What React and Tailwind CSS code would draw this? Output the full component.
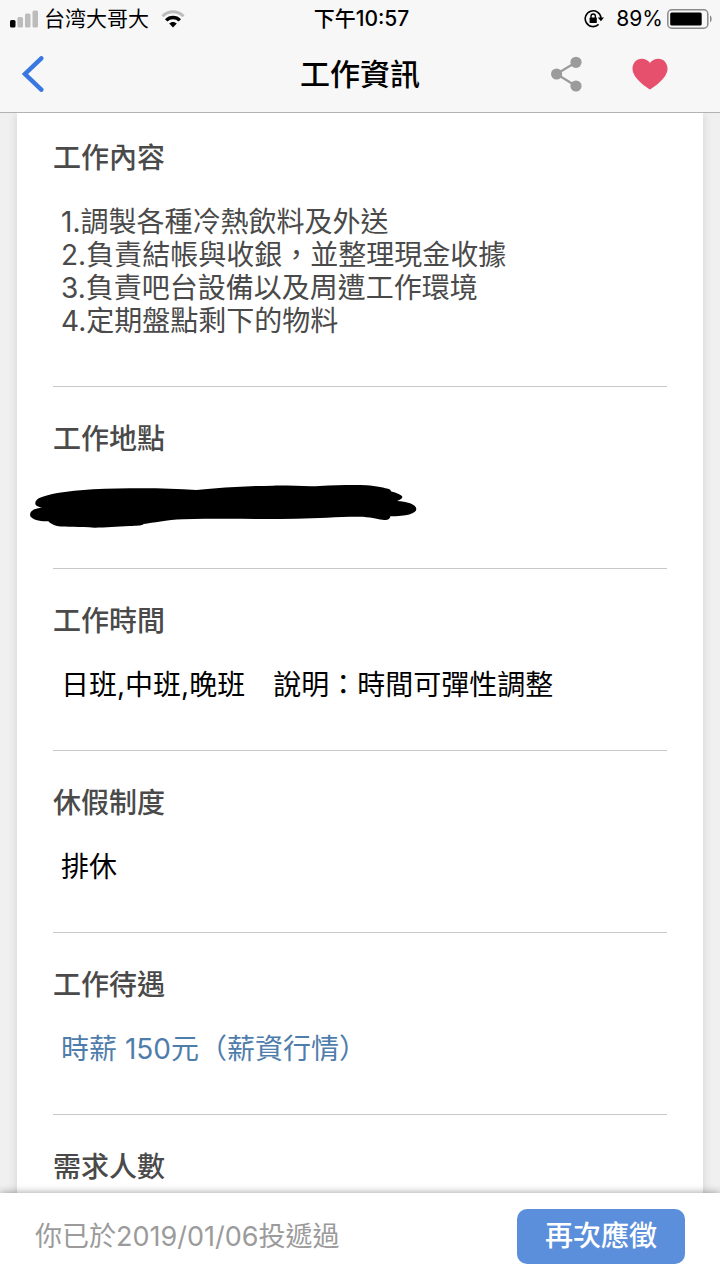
import React from "react";

const SignalIcon = () => (
  <svg className="h-[18px] w-7" viewBox="0 0 28 18" aria-hidden="true">
    <rect x="0" y="10" width="5.5" height="7.5" rx="1.5" fill="#000" />
    <rect x="7.5" y="7" width="5.5" height="10.5" rx="1.5" fill="#bcbcbc" />
    <rect x="15" y="3.5" width="5.5" height="14" rx="1.5" fill="#bcbcbc" />
    <rect x="22.5" y="0.5" width="5.5" height="17" rx="1.5" fill="#bcbcbc" />
  </svg>
);

const WifiIcon = () => (
  <svg className="h-[18px] w-6" viewBox="0 0 24 18" fill="none" aria-hidden="true">
    <path d="M1.5 6.2C7.5 0.2 16.5 0.2 22.5 6.2" stroke="#bcbcbc" strokeWidth="3" />
    <path d="M5.2 10.4C9 6.6 15 6.6 18.8 10.4" stroke="#000" strokeWidth="3.4" />
    <path d="M8.2 13.6C10.4 11.4 13.6 11.4 15.8 13.6L12 17.4Z" fill="#000" />
  </svg>
);

const RotationLockIcon = () => (
  <svg className="h-5 w-5" viewBox="0 0 20 20" fill="none" aria-hidden="true">
    <path d="M14.6 15.4A7.9 7.9 0 1 1 17 9" stroke="#000" strokeWidth="1.6" />
    <path d="M13.8 8.4H20L16.9 12.2Z" fill="#000" />
    <rect x="5.6" y="8.6" width="7.2" height="5.4" rx="0.6" fill="#000" />
    <path d="M7 9V7.2a2.2 2.2 0 0 1 4.4 0V9" stroke="#000" strokeWidth="1.4" />
  </svg>
);

const BatteryIcon = () => (
  <svg className="h-5 w-[46px]" viewBox="0 0 46 20" fill="none" aria-hidden="true">
    <rect x="0.8" y="0.8" width="40" height="18.4" rx="4" stroke="#8a8a8a" strokeWidth="1.5" />
    <rect x="3.2" y="3.5" width="31.5" height="13" rx="1.5" fill="#000" />
    <path d="M43 6.6C45.2 7.6 45.2 12.4 43 13.4Z" fill="#8a8a8a" />
  </svg>
);

const BackIcon = () => (
  <svg className="h-9 w-[22px]" viewBox="0 0 22 36" fill="none" aria-hidden="true">
    <path
      d="M19.3 2.3L3 18L19.3 33.7"
      stroke="#3878e0"
      strokeWidth="4.4"
      strokeLinecap="round"
      strokeLinejoin="miter"
    />
  </svg>
);

const ShareIcon = () => (
  <svg className="h-9 w-[31px]" viewBox="0 0 31 36" aria-hidden="true">
    <path d="M25 6.3L5.5 18L25 30" fill="none" stroke="#9b9b9b" strokeWidth="2.2" />
    <circle cx="25" cy="6.3" r="5.6" fill="#9b9b9b" />
    <circle cx="5.6" cy="18" r="5.6" fill="#9b9b9b" />
    <circle cx="25" cy="30" r="5.6" fill="#9b9b9b" />
  </svg>
);

const HeartIcon = () => (
  <svg className="h-8 w-9" viewBox="0 0 36 32" aria-hidden="true">
    <path
      d="M18 31.5C16.5 30.5 0.5 21 0.5 10.8C0.5 4.8 4.6 0.8 9.6 0.8C13.2 0.8 16.4 2.4 18 5C19.6 2.4 22.8 0.8 26.4 0.8C31.4 0.8 35.5 4.8 35.5 10.8C35.5 21 19.5 30.5 18 31.5Z"
      fill="#e6506c"
    />
  </svg>
);

// hand-drawn marker covering the address
const Scribble = () => (
  <svg
    className="-mt-[3px] -mb-2 -ml-8 h-[43px] w-[388px] shrink-0"
    viewBox="28 41 1164 129"
    aria-hidden="true"
  >
    <path
      d="M47 95C48 84 62 77 84 72C120 62 170 57 220 54C320 50 430 49 530 56C600 49 680 44 760 43C810 42 860 46 900 44C950 42 1000 40 1040 42C1070 44 1095 49 1112 55C1114 58 1112 60 1118 61C1132 65 1145 70 1148 76C1149 82 1140 86 1132 89C1160 90 1190 99 1190 113C1190 127 1160 135 1112 135C1112 143 1104 147 1094 146C1078 144 1060 139 1030 136C960 135 900 141 830 142C720 144 600 141 490 144C440 146 400 155 372 158C366 164 350 163 330 164C290 165 260 169 225 169C180 166 140 168 112 164C98 160 92 156 86 150C60 151 38 145 32 135C28 120 42 111 68 109C54 106 46 102 47 95Z"
      fill="#000"
    />
  </svg>
);

const sections = [
  {
    title: "工作內容",
    content: (
      <ol className="text-[#4a4a4a]">
        <li>1.調製各種冷熱飲料及外送</li>
        <li>2.負責結帳與收銀，並整理現金收據</li>
        <li>3.負責吧台設備以及周遭工作環境</li>
        <li>4.定期盤點剩下的物料</li>
      </ol>
    ),
  },
  { title: "工作地點", content: <Scribble /> },
  { title: "工作時間", content: <p>日班,中班,晚班　說明：時間可彈性調整</p> },
  { title: "休假制度", content: <p>排休</p> },
  {
    title: "工作待遇",
    content: (
      <a href="#salary" className="text-[#4f7dab]">
        時薪 150元（薪資行情）
      </a>
    ),
  },
  { title: "需求人數", content: null },
];

const StatusBar = () => (
  <div className="grid h-[38px] grid-cols-[1fr_auto_1fr] items-center pr-[7px] pl-[10px] text-[21px] leading-9">
    <div className="flex items-center gap-[6px]">
      <SignalIcon />
      <span>台湾大哥大</span>
      <span className="ml-[6px]">
        <WifiIcon />
      </span>
    </div>
    <span className="font-medium">下午10:57</span>
    <div className="flex items-center justify-end gap-1">
      <RotationLockIcon />
      <span className="ml-2">89%</span>
      <BatteryIcon />
    </div>
  </div>
);

const App = () => {
  return (
    <div
      lang="zh-TW"
      className="flex h-screen flex-col overflow-hidden bg-[#f0f0f0] font-['Inter','Noto_Sans_CJK_TC',sans-serif] text-black"
    >
      <header className="shrink-0 border-b border-[#b2b2b2] bg-[#f7f7f7]">
        <StatusBar />
        <nav className="grid grid-cols-[1fr_auto_1fr] items-center px-[22px] pt-4 pb-[18px]">
          <button type="button" aria-label="返回" className="justify-self-start">
            <BackIcon />
          </button>
          <h1 className="text-[30px] leading-10 font-medium">工作資訊</h1>
          <div className="flex items-center justify-end gap-[50px] pr-[30px]">
            <button type="button" aria-label="分享">
              <ShareIcon />
            </button>
            <button type="button" aria-label="收藏">
              <HeartIcon />
            </button>
          </div>
        </nav>
      </header>

      <main className="min-h-0 flex-1 overflow-hidden px-[17px]">
        <div className="min-h-full bg-white px-9 shadow-[0_0_10px_rgba(0,0,0,0.12)]">
          {sections.map((section) => (
            <section
              key={section.title}
              className="border-b border-[#c8c8c8] pt-8 pb-12 first:pt-[25px]"
            >
              <h2 className="text-[28px] leading-10 font-medium text-[#4a4a4a]">
                {section.title}
              </h2>
              <div className="mt-7 flex min-h-[33px] items-center pl-2 text-[28px] leading-[33px]">
                {section.content}
              </div>
            </section>
          ))}
        </div>
      </main>

      <footer className="z-10 flex shrink-0 items-center justify-between bg-white px-[35px] py-4 shadow-[0_0_8px_rgba(0,0,0,0.4)]">
        <p className="text-[27px] leading-[55px] text-[#9b9b9b]">你已於2019/01/06投遞過</p>
        <button
          type="button"
          className="rounded-[10px] bg-[#5c8fdb] px-7 text-[28px] leading-[55px] font-medium text-white"
        >
          再次應徵
        </button>
      </footer>
    </div>
  );
};

export default App;
